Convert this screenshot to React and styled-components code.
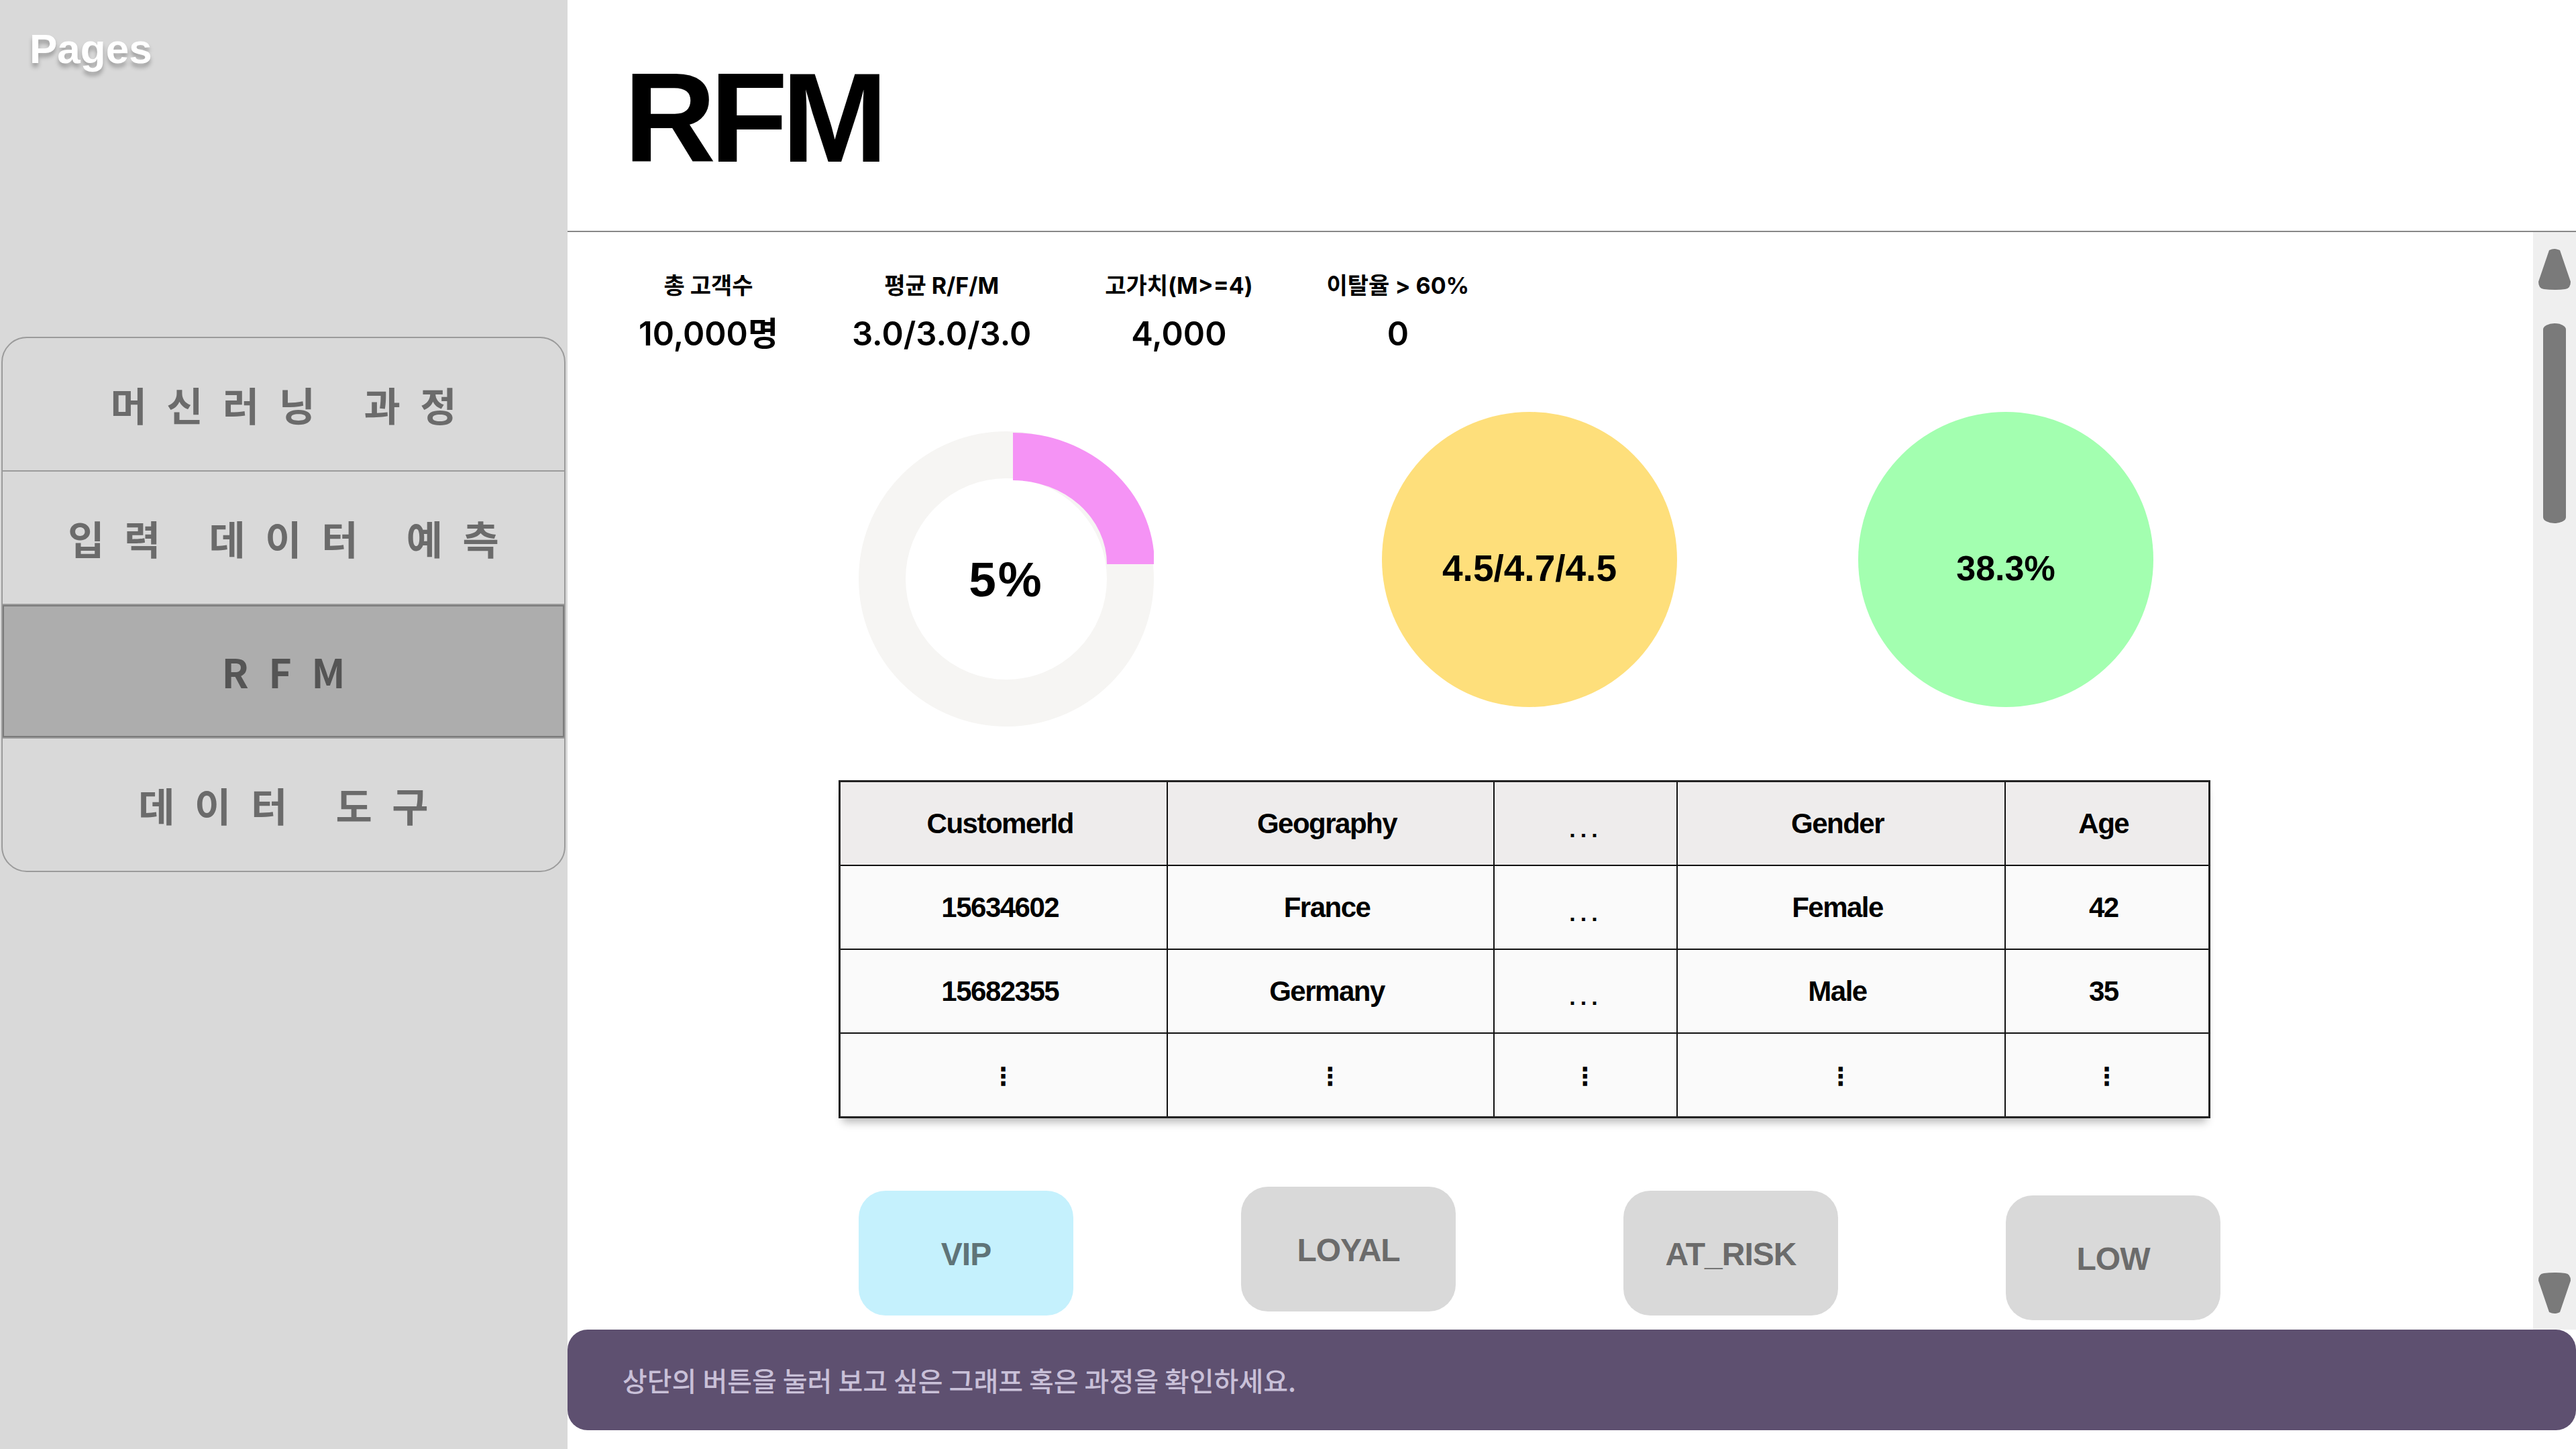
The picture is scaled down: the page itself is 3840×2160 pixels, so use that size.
import styled, { createGlobalStyle } from "styled-components";

const GlobalStyle = createGlobalStyle`
  html, body {
    margin: 0;
    padding: 0;
    background: #fff;
  }
  body {
    font-family: "Liberation Sans", "Noto Sans CJK KR", sans-serif;
  }
  #root {
    width: 3840px;
    height: 2160px;
  }
`;

const SLayout = styled.div`
  display: flex;
  width: 3840px;
  height: 2160px;
  overflow: hidden;
`;

const SSidebar = styled.aside`
  width: 846px;
  flex-shrink: 0;
  box-sizing: border-box;
  padding-top: 42px;
  background: #d9d9d9;
  display: flex;
  flex-direction: column;
`;

const SSidebarTitle = styled.div`
  margin-left: 44px;
  font: 700 62px/1 "Liberation Sans", sans-serif;
  color: #fff;
  text-shadow: 0 6px 6px rgba(0, 0, 0, 0.28);
`;

const SMenu = styled.nav`
  margin: 398px 3px 0 2px;
  border: 2px solid #9b9b9b;
  border-radius: 38px;
  overflow: hidden;
  display: flex;
  flex-direction: column;
`;

const SMenuItem = styled.div`
  height: 197px;
  display: flex;
  align-items: center;
  justify-content: center;
  padding-left: 0.5em;
  white-space: pre;
  font: 700 59px/1 "Noto Sans CJK KR", sans-serif;
  letter-spacing: 0.5em;
  color: ${(p) => (p.$active ? "#555555" : "#6b6b6b")};
  background: ${(p) => (p.$active ? "#adadad" : "transparent")};
  box-shadow: ${(p) => (p.$active ? "inset 0 0 0 2px #7b7b7b" : "none")};

  & + & {
    border-top: 2px solid #9b9b9b;
  }
`;

const SMain = styled.main`
  flex: 1;
  min-width: 0;
  display: flex;
  flex-direction: column;
  background: #fff;
`;

const SHeader = styled.header`
  height: 346px;
  flex-shrink: 0;
  box-sizing: border-box;
  padding: 80px 0 0 84px;
  border-bottom: 2px solid #888;
`;

const SPageTitle = styled.h1`
  margin: 0;
  font: 700 190px/1 "Liberation Sans", sans-serif;
  letter-spacing: -9px;
  color: #000;
`;

const SBody = styled.div`
  flex: 1;
  min-height: 0;
  display: flex;
`;

const SContent = styled.div`
  flex: 1;
  min-width: 0;
  overflow: hidden;
  display: flex;
  flex-direction: column;
  align-items: flex-start;
`;

const SScrollbar = styled.div`
  width: 64px;
  flex-shrink: 0;
  box-sizing: border-box;
  padding: 24px 0 23px;
  background: #efefef;
  display: flex;
  flex-direction: column;
  align-items: center;
`;

const SThumb = styled.div`
  width: 34px;
  height: 298px;
  margin-top: 50px;
  border-radius: 17px / 9px;
  background: #7a7a7a;
`;

const SSpacer = styled.div`
  flex: 1;
`;

const SStatsRow = styled.div`
  display: flex;
  gap: 110px;
  margin: 60px 0 0 106px;
`;

const SStat = styled.div`
  display: flex;
  flex-direction: column;
  align-items: center;
  color: #000;
`;

const SStatLabel = styled.div`
  font: 700 34px/40px "Inter", "Noto Sans CJK KR", sans-serif;
`;

const SStatValue = styled.div`
  margin-top: 24px;
  font: 600 49px/56px "Inter", "Noto Sans CJK KR", sans-serif;
`;

const SChartRow = styled.div`
  display: flex;
  align-items: flex-start;
  gap: 270px;
  margin: 88px 0 0 434px;
`;

const SDonut = styled.div`
  position: relative;
  width: 440px;
  height: 440px;
  margin-top: 29px;
  margin-right: 70px;

  svg {
    display: block;
  }
`;

const SDonutLabel = styled.div`
  position: absolute;
  inset: 0;
  display: flex;
  align-items: center;
  justify-content: center;
  font: 700 73px/1 "Liberation Sans", sans-serif;
  letter-spacing: 3px;
  color: #000;
`;

const SCircle = styled.div`
  width: 440px;
  height: 440px;
  box-sizing: border-box;
  padding-top: 26px;
  border-radius: 50%;
  background: ${(p) => p.$color};
  display: flex;
  align-items: center;
  justify-content: center;
  font: 700 ${(p) => p.$size}px/1 "Liberation Sans", sans-serif;
  color: #000;
`;

const STable = styled.table`
  margin: 80px 0 0 404px;
  width: 2042px;
  table-layout: fixed;
  border-collapse: collapse;
  border: 3px solid #222;
  box-shadow: 0 12px 12px -6px rgba(0, 0, 0, 0.28);
`;

const SCol = styled.col`
  width: ${(p) => p.$w}px;
`;

const SCell = styled.td`
  height: 123px;
  padding: 0 10px 0 0;
  border: 2px solid #111;
  text-align: center;
  vertical-align: middle;
  background: ${(p) => (p.$head ? "#eeecec" : "#fafafa")};
  font: 700 42px/1 "Liberation Sans", sans-serif;
  letter-spacing: -1.5px;
  color: #000;
`;

const SDots = styled.span`
  font: 700 34px/1 "Liberation Sans", sans-serif;
  letter-spacing: 7px;
  position: relative;
  top: 6px;
  left: 6px;
`;

const SVDots = styled.span`
  font: 700 36px/1 "DejaVu Sans", sans-serif;
  position: relative;
  left: 4px;
`;

const SButtonRow = styled.div`
  display: flex;
  align-items: flex-start;
  gap: 250px;
  margin: 108px 0 0 434px;
`;

const SSegButton = styled.button`
  width: 320px;
  height: 186px;
  margin-top: ${(p) => p.$offset || 0}px;
  padding: 4px 0 0;
  border: none;
  border-radius: 40px;
  background: ${(p) => (p.$active ? "#c5f1fd" : "#d9d9d9")};
  color: ${(p) => (p.$active ? "#5f7478" : "#6b6b6b")};
  font: 700 48px/1 "Liberation Sans", sans-serif;
  letter-spacing: -1px;
  cursor: pointer;
`;

const SFooter = styled.footer`
  height: 150px;
  flex-shrink: 0;
  margin-bottom: 28px;
  box-sizing: border-box;
  padding-left: 82px;
  border-radius: 30px;
  background: #5e5070;
  display: flex;
  align-items: center;
  font: 500 40px/1 "Noto Sans CJK KR", sans-serif;
  color: #c9c0d8;
`;

const ArrowUp = () => (
  <svg width="48" height="62" viewBox="0 0 48 62">
    <path
      d="M16 3 Q24 -1 32 3 L48 50 Q48 60 40 61 Q24 63 8 61 Q0 60 0 50 Z"
      fill="#7a7a7a"
    />
  </svg>
);

const ArrowDown = () => (
  <svg width="48" height="62" viewBox="0 0 48 62">
    <path
      d="M16 59 Q24 63 32 59 L48 12 Q48 2 40 1 Q24 -1 8 1 Q0 2 0 12 Z"
      fill="#7a7a7a"
    />
  </svg>
);

const menu = ["머신러닝 과정", "입력 데이터 예측", "RFM", "데이터 도구"];

const stats = [
  { label: "총 고객수", value: "10,000명" },
  { label: "평균 R/F/M", value: "3.0/3.0/3.0" },
  { label: "고가치(M>=4)", value: "4,000" },
  { label: "이탈율 > 60%", value: "0" },
];

const colWidths = [488, 487, 273, 489, 305];
const headers = ["CustomerId", "Geography", "...", "Gender", "Age"];
const rows = [
  ["15634602", "France", "...", "Female", "42"],
  ["15682355", "Germany", "...", "Male", "35"],
  ["⋮", "⋮", "⋮", "⋮", "⋮"],
];

const segments = [
  { name: "VIP", active: true, offset: 0 },
  { name: "LOYAL", offset: -6 },
  { name: "AT_RISK", offset: 0 },
  { name: "LOW", offset: 7 },
];

const renderCell = (text) => {
  if (text === "...") return <SDots>...</SDots>;
  if (text === "⋮") return <SVDots>⋮</SVDots>;
  return text;
};

export default function App() {
  return (
    <>
      <GlobalStyle />
      <SLayout>
        <SSidebar>
          <SSidebarTitle>Pages</SSidebarTitle>
          <SMenu>
            {menu.map((m) => (
              <SMenuItem key={m} $active={m === "RFM"}>
                {m}
              </SMenuItem>
            ))}
          </SMenu>
        </SSidebar>

        <SMain>
          <SHeader>
            <SPageTitle>RFM</SPageTitle>
          </SHeader>

          <SBody>
            <SContent>
              <SStatsRow>
                {stats.map((s) => (
                  <SStat key={s.label}>
                    <SStatLabel>{s.label}</SStatLabel>
                    <SStatValue>{s.value}</SStatValue>
                  </SStat>
                ))}
              </SStatsRow>

              <SChartRow>
                <SDonut>
                  <svg width="440" height="440" viewBox="0 0 440 440">
                    <circle
                      cx="220"
                      cy="220"
                      r="185"
                      fill="none"
                      stroke="#f6f5f3"
                      strokeWidth="70"
                    />
                    <path
                      d="M230 2 A211 196 0 0 1 441 198 L370 198 A140 125 0 0 0 230 73 Z"
                      fill="#f593f5"
                    />
                  </svg>
                  <SDonutLabel>5%</SDonutLabel>
                </SDonut>
                <SCircle $color="#fedf7b" $size={55}>
                  4.5/4.7/4.5
                </SCircle>
                <SCircle $color="#a3ffb0" $size={52}>
                  38.3%
                </SCircle>
              </SChartRow>

              <STable>
                <colgroup>
                  {colWidths.map((w, i) => (
                    <SCol key={i} $w={w} />
                  ))}
                </colgroup>
                <thead>
                  <tr>
                    {headers.map((h) => (
                      <SCell as="th" key={h} $head>
                        {renderCell(h)}
                      </SCell>
                    ))}
                  </tr>
                </thead>
                <tbody>
                  {rows.map((r, ri) => (
                    <tr key={ri}>
                      {r.map((c, ci) => (
                        <SCell key={ci}>{renderCell(c)}</SCell>
                      ))}
                    </tr>
                  ))}
                </tbody>
              </STable>

              <SButtonRow>
                {segments.map((s) => (
                  <SSegButton key={s.name} $active={s.active} $offset={s.offset}>
                    {s.name}
                  </SSegButton>
                ))}
              </SButtonRow>
            </SContent>

            <SScrollbar>
              <ArrowUp />
              <SThumb />
              <SSpacer />
              <ArrowDown />
            </SScrollbar>
          </SBody>

          <SFooter>상단의 버튼을 눌러 보고 싶은 그래프 혹은 과정을 확인하세요.</SFooter>
        </SMain>
      </SLayout>
    </>
  );
}
